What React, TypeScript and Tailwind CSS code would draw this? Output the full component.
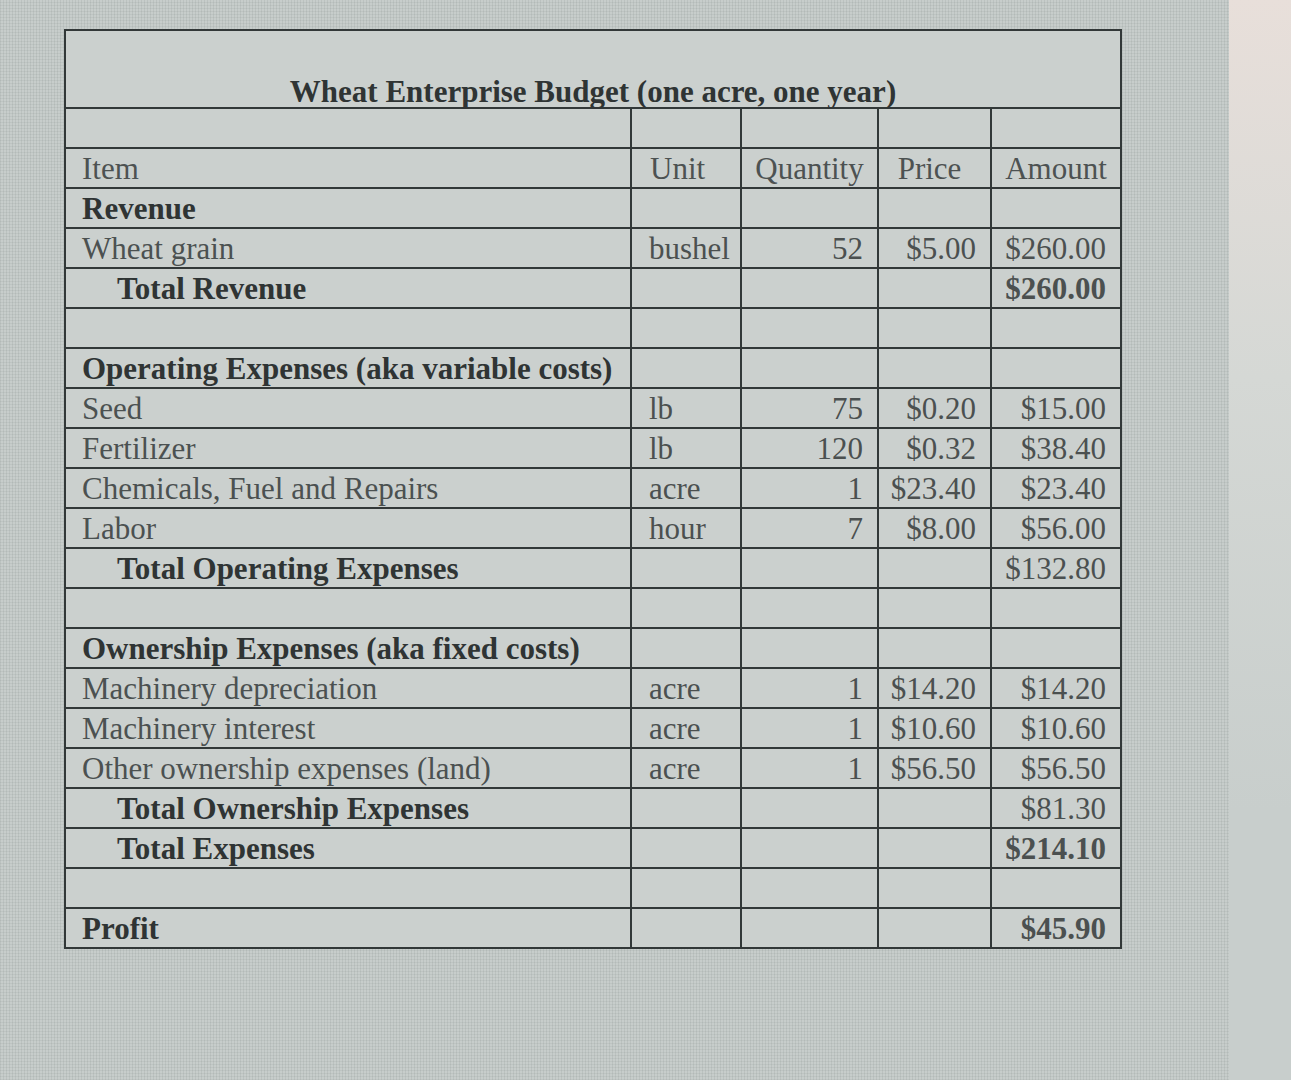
import React from 'react'

type Row = {
  kind?: 'blank' | 'header'
  item?: string
  bold?: boolean
  indent?: boolean
  unit?: string
  qty?: string
  price?: string
  amount?: string
  amountBold?: boolean
}

const rows: Row[] = [
  { kind: 'blank' },
  { kind: 'header' },
  { item: 'Revenue', bold: true },
  { item: 'Wheat grain', unit: 'bushel', qty: '52', price: '$5.00', amount: '$260.00' },
  { item: 'Total Revenue', bold: true, indent: true, amount: '$260.00', amountBold: true },
  { kind: 'blank' },
  { item: 'Operating Expenses (aka variable costs)', bold: true },
  { item: 'Seed', unit: 'lb', qty: '75', price: '$0.20', amount: '$15.00' },
  { item: 'Fertilizer', unit: 'lb', qty: '120', price: '$0.32', amount: '$38.40' },
  { item: 'Chemicals, Fuel and Repairs', unit: 'acre', qty: '1', price: '$23.40', amount: '$23.40' },
  { item: 'Labor', unit: 'hour', qty: '7', price: '$8.00', amount: '$56.00' },
  { item: 'Total Operating Expenses', bold: true, indent: true, amount: '$132.80' },
  { kind: 'blank' },
  { item: 'Ownership Expenses (aka fixed costs)', bold: true },
  { item: 'Machinery depreciation', unit: 'acre', qty: '1', price: '$14.20', amount: '$14.20' },
  { item: 'Machinery interest', unit: 'acre', qty: '1', price: '$10.60', amount: '$10.60' },
  { item: 'Other ownership expenses (land)', unit: 'acre', qty: '1', price: '$56.50', amount: '$56.50' },
  { item: 'Total Ownership Expenses', bold: true, indent: true, amount: '$81.30' },
  { item: 'Total Expenses', bold: true, indent: true, amount: '$214.10', amountBold: true },
  { kind: 'blank' },
  { item: 'Profit', bold: true, amount: '$45.90', amountBold: true },
]

const cell = 'border-2 border-[#323838] h-[40px] align-bottom pb-[3px] leading-[31px] whitespace-nowrap overflow-hidden'
const num = `${cell} text-right pr-[14px] text-[#4b5050]`

function BudgetRow({ row }: { row: Row }) {
  if (row.kind === 'blank') {
    return (
      <tr>
        <td className={cell} />
        <td className={cell} />
        <td className={cell} />
        <td className={cell} />
        <td className={cell} />
      </tr>
    )
  }

  if (row.kind === 'header') {
    return (
      <tr className="text-[#4d5252]">
        <td className={`${cell} pl-[16px]`}>Item</td>
        <td className={`${cell} pl-[18px]`}>Unit</td>
        <td className={`${cell} text-center`}>Quantity</td>
        <td className={`${cell} text-center pr-[10px]`}>Price</td>
        <td className={`${cell} text-center`}>Amount</td>
      </tr>
    )
  }

  return (
    <tr>
      <td
        className={`${cell} ${row.indent ? 'pl-[51px]' : 'pl-[16px]'} ${
          row.bold ? 'font-bold text-[#2f3434]' : 'text-[#4b5151]'
        }`}
      >
        {row.item}
      </td>
      <td className={`${cell} pl-[17px] text-[#4b5050]`}>{row.unit}</td>
      <td className={num}>{row.qty}</td>
      <td className={num}>{row.price}</td>
      <td className={`${num} ${row.amountBold ? 'font-bold' : ''}`}>{row.amount}</td>
    </tr>
  )
}

export default function App() {
  return (
    <div className="flex w-[1291px] h-[1080px] overflow-hidden bg-[#c7cdcb] font-['Liberation_Serif',serif] text-[31px]">
      <div className="flex-1 pt-[29px] pl-[64px] bg-[repeating-linear-gradient(90deg,rgba(70,82,78,0.09)_0px,rgba(70,82,78,0.09)_1px,transparent_1px,transparent_3px),repeating-linear-gradient(0deg,rgba(70,82,78,0.07)_0px,rgba(70,82,78,0.07)_1px,transparent_1px,transparent_3px)]">
        <table className="table-fixed border-collapse w-[1056px] bg-[#cbd0ce]">
          <colgroup>
            <col className="w-[566px]" />
            <col className="w-[110px]" />
            <col className="w-[137px]" />
            <col className="w-[113px]" />
            <col className="w-[130px]" />
          </colgroup>
          <tbody>
            <tr>
              <td
                colSpan={5}
                className="border-2 border-[#323838] h-[78px] align-bottom text-center font-bold text-[#2f3434] leading-[31px] pb-0"
              >
                Wheat Enterprise Budget (one acre, one year)
              </td>
            </tr>
            {rows.map((row, i) => (
              <BudgetRow key={i} row={row} />
            ))}
          </tbody>
        </table>
      </div>
      <div className="w-[62px] bg-gradient-to-b from-[#e8dfda] via-[#d5d8d5] via-35% to-[#c8cecc] to-75%" />
    </div>
  )
}
